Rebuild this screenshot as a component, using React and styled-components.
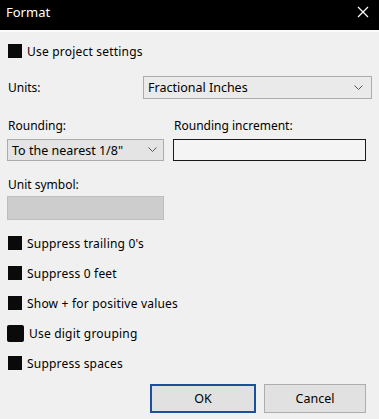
import React from "react";
import styled, { createGlobalStyle } from "styled-components";

const Global = createGlobalStyle`
  html, body { margin: 0; padding: 0; background: #f0f0f0; }
  * { box-sizing: border-box; }
`;

const Window = styled.div`
  width: 379px;
  height: 419px;
  background: #f0f0f0;
  display: flex;
  flex-direction: column;
  font-family: "Noto Sans", "Liberation Sans", sans-serif;
  font-size: 12px;
  color: #000;
  overflow: hidden;
`;

const TitleBar = styled.div`
  height: 32px;
  background: #000;
  border-bottom: 2px solid #fafafa;
  display: flex;
  align-items: flex-start;
  justify-content: space-between;
  padding: 3px 10px 0 6px;
  color: #fff;
  flex-shrink: 0;
`;

const Title = styled.span`
  font-size: 13px;
  line-height: 18px;
`;

const Body = styled.div`
  display: flex;
  flex-direction: column;
  padding: 0 7px;
`;

const CheckRow = styled.label`
  display: flex;
  align-items: center;
  gap: 5px;
  height: 16px;
  margin-top: ${(p) => p.$mt || 0}px;
  padding-left: 1px;
  letter-spacing: 0.2px;
`;

const Box = styled.span`
  width: ${(p) => (p.$big ? 17 : 14)}px;
  height: ${(p) => (p.$big ? 17 : 14)}px;
  margin-left: ${(p) => (p.$big ? -1 : 0)}px;
  background: #0a0a0a;
  border-radius: ${(p) => (p.$big ? 2 : 0)}px;
  flex-shrink: 0;
`;

const UnitsRow = styled.div`
  display: flex;
  align-items: center;
  justify-content: space-between;
  margin-top: 17px;
  padding-left: 1px;
`;

const Select = styled.div`
  display: flex;
  align-items: center;
  justify-content: space-between;
  width: ${(p) => p.$w}px;
  height: ${(p) => p.$h}px;
  background: ${(p) => p.$bg};
  border: 1px solid #acacac;
  padding: 0 ${(p) => p.$pr || 8}px 0 4px;
  font-size: 12.5px;
`;

const Grid = styled.div`
  display: grid;
  grid-template-columns: 157px 193px;
  column-gap: 9px;
  margin-top: ${(p) => p.$mt}px;
`;

const Label = styled.span`
  line-height: 16px;
  padding-left: 1px;
`;

const Input = styled.div`
  height: 22px;
  background: #f4f4f4;
  border: 1.5px solid #1a1a1a;
`;

const Disabled = styled.div`
  width: 157px;
  height: 24px;
  margin-top: 3px;
  background: #cdcdcd;
  border: 1px solid #bdbdbd;
`;

const UnitLabel = styled.div`
  margin-top: 16px;
  line-height: 16px;
  padding-left: 1px;
`;

const Checks = styled.div`
  display: flex;
  flex-direction: column;
  gap: 14px;
  margin-top: 15px;
`;

const Buttons = styled.div`
  display: flex;
  justify-content: flex-end;
  gap: 8px;
  margin-top: 13px;
  padding-right: 6px;
`;

const Button = styled.div`
  width: ${(p) => p.$w}px;
  height: 29px;
  display: flex;
  align-items: center;
  justify-content: center;
  background: #e1e1e1;
  border: ${(p) => (p.$primary ? "2px solid #1c4f9c" : "1px solid #adadad")};
  font-size: 12.5px;
`;

const Chevron = () => (
  <svg width="9" height="6" viewBox="0 0 9 6">
    <path d="M0.5 0.5 L4.5 4.5 L8.5 0.5" fill="none" stroke="#555" strokeWidth="1" />
  </svg>
);

const Close = () => (
  <svg width="12" height="12" viewBox="0 0 12 12" style={{ marginTop: 3 }}>
    <path d="M1 1 L11 11 M11 1 L1 11" stroke="#fff" strokeWidth="1.2" />
  </svg>
);

export default function App() {
  return (
    <Window>
      <Global />
      <TitleBar>
        <Title>Format</Title>
        <Close />
      </TitleBar>
      <Body>
        <CheckRow $mt={11}>
          <Box />
          Use project settings
        </CheckRow>
        <UnitsRow>
          <span>Units:</span>
          <Select $w={229} $h={23} $bg="#eaeaea">
            Fractional Inches
            <Chevron />
          </Select>
        </UnitsRow>
        <Grid $mt={19}>
          <Label>Rounding:</Label>
          <Label>Rounding increment:</Label>
        </Grid>
        <Grid $mt={5}>
          <Select $w={157} $h={22} $bg="#e4e4e4" $pr={6}>
            To the nearest 1/8"
            <Chevron />
          </Select>
          <Input />
        </Grid>
        <UnitLabel>Unit symbol:</UnitLabel>
        <Disabled />
        <Checks>
          <CheckRow>
            <Box />
            Suppress trailing 0's
          </CheckRow>
          <CheckRow>
            <Box />
            Suppress 0 feet
          </CheckRow>
          <CheckRow>
            <Box />
            Show + for positive values
          </CheckRow>
          <CheckRow>
            <Box $big />
            Use digit grouping
          </CheckRow>
          <CheckRow>
            <Box />
            Suppress spaces
          </CheckRow>
        </Checks>
        <Buttons>
          <Button $primary $w={106}>OK</Button>
          <Button $w={102}>Cancel</Button>
        </Buttons>
      </Body>
    </Window>
  );
}
